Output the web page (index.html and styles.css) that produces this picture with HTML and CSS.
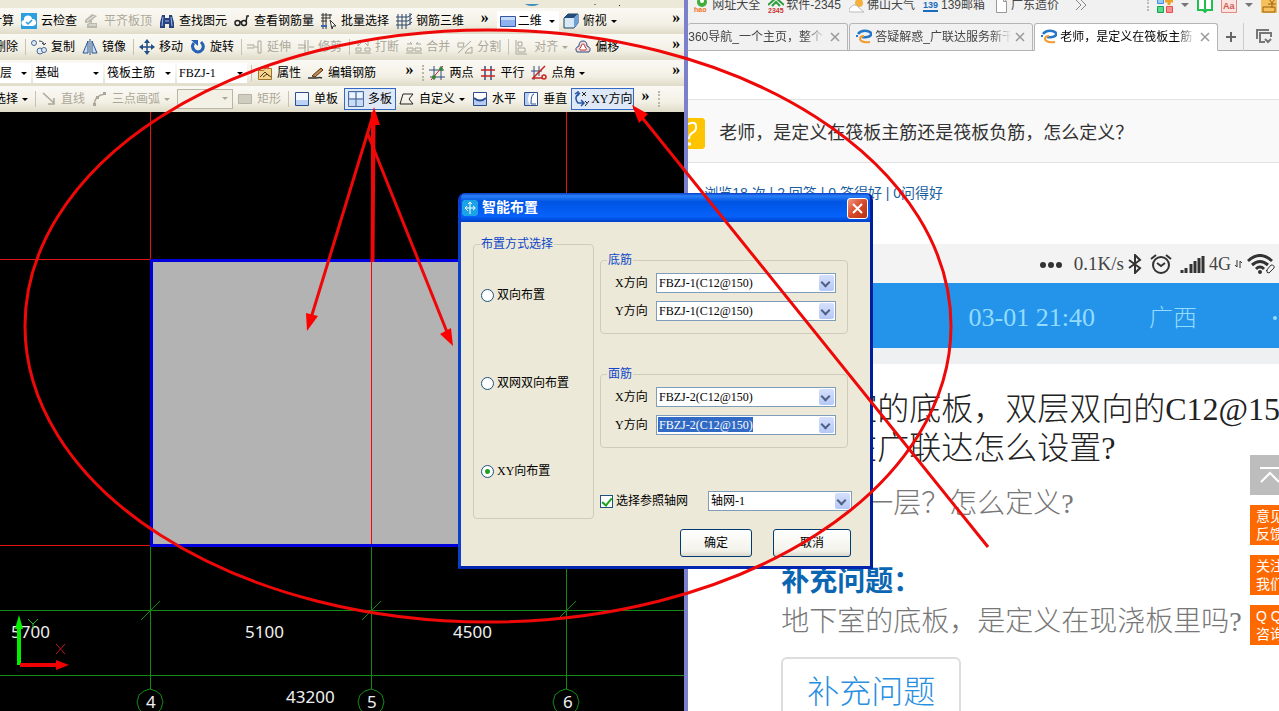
FILE: index.html
```html
<!DOCTYPE html>
<html lang="zh-CN">
<head>
<meta charset="utf-8">
<title>智能布置</title>
<link rel="stylesheet" href="styles.css">
</head>
<body>
<main class="desktop">
<section class="cad" aria-label="钢筋绘图">
  <div class="topstrip"><svg width="120" height="8" aria-hidden="true"><ellipse cx="32" cy="-2" rx="8" ry="4" fill="#3c8fc0"/><path d="M94 0h2M121 0l-2 2" stroke="#222"/></svg></div>

  <div class="bar">
    <div class="strip strip-a">
      <button class="tool cut">计算</button>
      <button class="tool"><svg class="ic" viewBox="0 0 16 16"><path fill="#2b9fe0" d="M0 0h16v16H0z"/><path fill="#fff" d="M4 13a3 3 0 0 1-1-6 4 4 0 0 1 8-1 3.500 3.500 0 0 1 1 7z"/><path d="M5 9l2 2 4-4" stroke="#2b9fe0" stroke-width="1.500" fill="none"/></svg>云检查</button>
      <button class="tool off"><svg class="ic" viewBox="0 0 16 16"><path fill="#bbb8ac" d="M1 7l7-6 5 2-5 4v3h5v5H3v-4l4-2-6 1z"/><path stroke="#eee" d="M3 8l7-5M5 12h7" fill="none"/></svg>平齐板顶</button>
      <button class="tool"><svg class="ic" viewBox="0 0 16 16"><path fill="#26437f" d="M3 2h3v3h4V2h3l2 8v5h-5v-4H6v4H1v-5z"/><path stroke="#9db8ea" d="M4 4L3 13M12 4l1 9M6 8h4" fill="none"/></svg>查找图元</button>
      <button class="tool"><svg class="ic" viewBox="0 0 16 16"><g fill="none" stroke="#222" stroke-width="1.500"><circle cx="3.500" cy="10" r="2.500"/><circle cx="10" cy="10" r="2.500"/><path d="M6 9h2M12 9l1-6h2"/></g></svg>查看钢筋量</button>
      <button class="tool"><svg class="ic" viewBox="0 0 16 16"><path d="M0 2h11M0 5h9M0 8h6M2 0v16M5 0v16M9 1v5" stroke="#333" fill="none"/><path d="M9 7l6 6-3 0-1 3z" fill="#fff" stroke="#333"/><path d="M0 13h6" stroke="#3b62b5" stroke-width="2"/></svg>批量选择</button>
      <button class="tool"><svg class="ic" viewBox="0 0 16 16"><path d="M0 4h12l4-3M0 8h12l4-3M0 12h12l4-3M2 1v15M6 1v15M10 1v15M14 0v12" stroke="#2d4668" fill="none"/></svg>钢筋三维</button>
      <button class="more">»</button>
    </div>
    <div class="strip">
      <span class="combo combo-view"><svg class="ic" viewBox="0 0 16 16"><path fill="#8fb2ee" stroke="#3157a5" d="M.5 3.500h15v10H.5z"/><path fill="#c7dafa" d="M1 4h14v3H1z"/></svg><select aria-label="视图"><option>二维</option></select></span>
      <button class="tool"><svg class="ic" viewBox="0 0 16 16"><path fill="#d7e8f7" stroke="#20405f" d="M1 5l4-4h10v9l-4 5H1z"/><path fill="#244d7d" d="M1 5l4-4h10l-4 4z"/><path fill="#6ca2d8" d="M11 5l4-4v9l-4 5z"/></svg>俯视<i class="tri"></i></button>
      <button class="more">»</button>
    </div>
  </div>

  <div class="bar">
    <div class="strip">
      <button class="tool cut-s">删除</button><i class="sep"></i>
      <button class="tool"><svg class="ic" viewBox="0 0 16 16"><g fill="#dfe9f7" stroke="#4a6a94"><circle cx="3" cy="4" r="2.500"/><circle cx="9" cy="12" r="3"/><circle cx="13" cy="11" r="2.500"/></g><path d="M8 2q5 0 5 4m-2-2l2 2 2-2" fill="none" stroke="#345"/></svg>复制</button>
      <button class="tool"><svg class="ic" viewBox="0 0 16 16"><path d="M6 2v12H1zM10 2v12h5z" fill="#c8dcf4" stroke="#2b5490"/><path d="M8 0v16" stroke="#2b5490"/></svg>镜像</button><i class="sep"></i>
      <button class="tool"><svg class="ic" viewBox="0 0 16 16"><path d="M8 2v12M2 8h12" stroke="#234e86" stroke-width="1.500"/><path fill="#234e86" d="M8 0l3 4H5zM8 16l3-4H5zM0 8l4-3v6zM16 8l-4-3v6z"/></svg>移动</button>
      <button class="tool"><svg class="ic" viewBox="0 0 16 16"><path d="M4 4q-3 3 0 7 4 4 8 0 3-4-1-8" fill="none" stroke="#2661b4" stroke-width="3"/><path fill="#2661b4" d="M1 1h7v6z"/></svg>旋转</button><i class="sep"></i>
      <button class="tool off"><svg class="ic" viewBox="0 0 16 16"><path d="M0 6h7v3H0M8 8h3M11 2h3v12h-3z" fill="none" stroke="#aaa79a"/></svg>延伸</button>
      <button class="tool off"><svg class="ic" viewBox="0 0 16 16"><path d="M0 6h7v3H0M7 1v14h3V1M11 8h5" fill="none" stroke="#aaa79a"/></svg>修剪</button><i class="sep"></i>
      <button class="tool off"><svg class="ic" viewBox="0 0 16 16"><path d="M0 14h16M1 9h5v3H1zM10 9h5v3h-5zM3 2v5l3-3M13 2v5l-3-3" fill="none" stroke="#aaa79a"/></svg>打断</button>
      <button class="tool off"><svg class="ic" viewBox="0 0 16 16"><path d="M0 14h16M1 9h6v3H1zM9 9h6v3H9zM1 5h5L4 3M15 5h-5l2-2" fill="none" stroke="#aaa79a"/></svg>合并</button>
      <button class="tool off"><svg class="ic" viewBox="0 0 16 16"><path d="M1 4h6l-1 4H1zM1 14L14 2M8 14h7V8l-4 2z" fill="none" stroke="#aaa79a"/></svg>分割</button><i class="sep"></i>
      <button class="tool off"><svg class="ic" viewBox="0 0 16 16"><path d="M2 1v14h11M4 3h4v4H4zM4 9h7v4H4z" fill="none" stroke="#aaa79a"/></svg>对齐<i class="tri"></i></button>
      <button class="tool"><svg class="ic" viewBox="0 0 16 16"><path d="M2 13q-3-4 2-6 0-5 4-5t4 5q5 2 2 6z" fill="#f3d9dc" stroke="#294b7c"/><path d="M5 11q-1-2 1-3 0-3 2-3t2 3q2 1 1 3z" fill="#fff" stroke="#c43a3a"/></svg>偏移</button>
      <button class="more">»</button>
    </div>
  </div>

  <div class="bar">
    <div class="strip strip-b">
      <span class="combo combo-floor"><select aria-label="楼层"><option>层</option></select></span>
      <span class="combo"><select aria-label="类型"><option>基础</option></select></span>
      <span class="combo"><select aria-label="构件"><option>筏板主筋</option></select></span>
      <span class="combo"><select aria-label="名称"><option>FBZJ-1</option></select></span>
      <i class="sep sep-in"></i>
      <button class="tool"><svg class="ic" viewBox="0 0 16 16"><path fill="#f4d58c" stroke="#a0732c" d="M1.500 5.500h5l1-2h7v11h-13z"/><path fill="none" stroke="#553b1c" d="M3 12l5-5 4 4M6 12l4-3 4 3"/><path fill="#d54" d="M9 1h3v3H9z"/></svg>属性</button>
      <button class="tool"><svg class="ic" viewBox="0 0 16 16"><path d="M0 13h8q4-1 6 0" fill="none" stroke="#333" stroke-width="1.500"/><path d="M4 11l9-8 2 2-8 7z" fill="#c8894b" stroke="#4c3018"/></svg>编辑钢筋</button>
      <button class="more">»</button>
    </div>
    <div class="strip">
      <i class="grip"></i>
      <button class="tool"><svg class="ic" viewBox="0 0 16 16"><path d="M0 5h15M1 12h15M5 1v14M12 1v14" stroke="#334c80"/><path d="M2 15L14 1" stroke="#c22"/><circle cx="5" cy="12" r="2" fill="#383"/><circle cx="12" cy="4" r="2" fill="#383"/></svg>两点</button>
      <button class="tool"><svg class="ic" viewBox="0 0 16 16"><path d="M5 1v14M11 1v14" stroke="#334c80" stroke-width="1.500"/><path d="M1 5h14M1 11h14" stroke="#c22" stroke-width="1.500"/></svg>平行</button>
      <button class="tool"><svg class="ic" viewBox="0 0 16 16"><path d="M0 6h11M3 1v14M8 1v10" stroke="#334c80"/><path d="M1 14L14 1M2 13h9" stroke="#c22" stroke-width="1.500"/><circle cx="13" cy="12" r="2" fill="none" stroke="#c22" stroke-width="1.500"/></svg>点角<i class="tri"></i></button>
      <button class="more">»</button>
    </div>
  </div>

  <div class="bar">
    <div class="strip">
      <button class="tool cut-s">选择<i class="tri"></i></button><i class="sep"></i>
      <button class="tool off"><svg class="ic" viewBox="0 0 16 16"><path d="M2 2l11 10M13 7v6H7" fill="none" stroke="#aaa79a" stroke-width="1.500"/></svg>直线</button>
      <button class="tool off"><svg class="ic" viewBox="0 0 16 16"><path d="M2 14Q3 4 13 3" fill="none" stroke="#aaa79a" stroke-width="1.500"/><path d="M1 12h3v3H1zM11 1h3v3h-3zM4 5h3v3H4z" fill="#aaa79a"/></svg>三点画弧<i class="tri"></i></button>
      <span class="combo combo-off"><select aria-label="画弧参数" disabled><option></option></select></span>
      <button class="tool off"><svg class="ic" viewBox="0 0 16 16"><path d="M1.500 3.500h13v9h-13z" fill="#cfccc0" stroke="#b7b4a7"/></svg>矩形</button><i class="sep"></i>
      <button class="tool"><svg class="ic" viewBox="0 0 16 16"><path d="M1.500 1.500h13v13h-13z" fill="#f4f8ff" stroke="#2c4f91"/><path d="M2 9h12v5H2z" fill="#bcd2f6"/></svg>单板</button>
      <button class="tool on"><svg class="ic" viewBox="0 0 16 16"><path d="M.5.500h15v15H.5z" fill="#c9dcf7" stroke="#4b6d9f"/><path d="M8 1v14M1 8h14" stroke="#3c5c8c"/><path d="M2 2h5v5H2zM9 2h5v5H9z" fill="#edf5ff"/></svg>多板</button>
      <button class="tool"><svg class="ic" viewBox="0 0 16 16"><path d="M4 3h10l-4 5 4 5H1z" fill="none" stroke="#222"/></svg>自定义<i class="tri"></i></button>
      <button class="tool"><svg class="ic" viewBox="0 0 16 16"><path d="M1.500 1.500h13v13h-13z" fill="#b6cdf1" stroke="#2c4f91"/><path d="M2 2h12v5q-6 5-12 0z" fill="#fff"/><path d="M2 7q6 5 12 0" fill="none" stroke="#2c4f91" stroke-width="2"/></svg>水平</button>
      <button class="tool"><svg class="ic" viewBox="0 0 16 16"><path d="M1.500 1.500h13v13h-13z" fill="#b6cdf1" stroke="#2c4f91"/><path d="M7 2h7v12H7q-4-6 0-12z" fill="#fff"/><path d="M11 3q-3 0-3 10h5" fill="none" stroke="#2c4f91"/></svg>垂直</button>
      <button class="tool on tight"><svg class="ic" viewBox="0 0 16 16"><path d="M7 2q-7 4-2 10h5M2 3l3-2v4M8 9l3 3-3 3" fill="none" stroke="#2856a2" stroke-width="1.500"/><path d="M9 1l4 4m0-4L9 5M12 10l2 2m2-2l-4 5" stroke="#222"/></svg>XY方向</button>
      <button class="more near">»</button><i class="grip"></i>
    </div>
  </div>

  <svg class="canvas" role="img" aria-label="轴网图">
    <g transform="translate(0 -112)" fill="none" shape-rendering="crispEdges">
      <path d="M150.500 112v148M371.500 112v148M566.500 112v148" stroke="#e01414"/>
      <path d="M0 259h150v1H0zM0 545h150v1H0z" fill="#e01414"/>
      <path d="M151.500 260.500h415v285h-415z" fill="#b3b3b3" stroke="#0000dc" stroke-width="3"/>
      <path d="M371 262h1v282h-1z" fill="#f00808"/>
      <path d="M150.500 547v142M371.500 547v142M566.500 547v142M0 610.500h684M0 675.500h684" stroke="#148a14"/>
      <g stroke="#148a14" shape-rendering="auto"><path d="M141 620l19-19M362 620l19-19M560 617l16-16"/>
        <path id="axis" d="M150 689l6 2 5 4 2 7-2 7-5 5h-12l-5-5-2-7 2-7 5-4z"/><use href="#axis" x="221"/><use href="#axis" x="416"/></g>
      <g class="dims"><text x="11" y="638">5700</text><text x="245" y="638">5100</text><text x="453" y="638">4500</text><text x="286" y="703">43200</text><text x="146" y="708">4</text><text x="367" y="708">5</text><text x="563" y="708">6</text></g>
      <g shape-rendering="auto"><path d="M19 665v-38" stroke="#00f000" stroke-width="4"/><path d="M19 615l4 14h-8z" fill="#00f000"/><path d="M28 619l5 5 5-5M33 624v5" stroke="#20b820"/>
      <path d="M20 665h37" stroke="#f00000" stroke-width="4"/><path d="M69 665l-13 5v-10z" fill="#f00000"/><path d="M56 644l9 10m0-10l-9 10" stroke="#c01818"/></g>
    </g>
  </svg>
</section>

<section class="browser" aria-label="浏览器">
  <nav class="marks">
    <a href="#"><svg class="ic" viewBox="0 0 16 16"><circle cx="8" cy="5" r="5" fill="#3fae3b"/><circle cx="8" cy="4" r="2" fill="#fff"/><text class="mini orange" x="0" y="15">hao</text></svg>网址大全</a>
    <a href="#"><svg class="ic" viewBox="0 0 16 16"><path d="M0 8l8-7 8 7M4 9l4-4 4 4" fill="none" stroke="#2f9e3e" stroke-width="2"/><text class="mini red" x="0" y="16">2345</text></svg>软件-2345</a>
    <a href="#"><svg class="ic" viewBox="0 0 16 16"><circle cx="10" cy="6" r="4" fill="#f6b13c"/><path d="M1 15a3 3 0 0 1 1-5 4 4 0 0 1 7 0l6 5z" fill="#fff" stroke="#bbb"/></svg>佛山天气</a>
    <a href="#"><svg class="ic" viewBox="0 0 16 16"><text class="mini blue" x="0" y="11">139</text><path d="M0 14h15" stroke="#1a6dbd" stroke-width="2"/></svg>139邮箱</a>
    <a href="#"><svg class="ic" viewBox="0 0 16 16"><path d="M3.500.5h7l3 4v11h-10zM10.500.5v4h3" fill="#fff" stroke="#999"/></svg>广东造价</a>
    <button class="chev" aria-label="更多书签"><svg width="12" height="12" viewBox="0 0 12 12"><path d="M1 1l5 5-5 5M6 1l5 5-5 5" fill="none" stroke="#888"/></svg></button>
    <span class="ext">
      <i class="dots"></i>
      <svg class="ic" viewBox="0 0 16 16"><g stroke-width="1"><path d="M.5.5h6v6h-6z" fill="#9cc8f5" stroke="#3b8ee0"/><path d="M.5 9.500h6v6h-6z" fill="#59d98a" stroke="#18a050"/><path d="M9.500 9.500h6v6h-6z" fill="#ff8f8f" stroke="#e05050"/><path d="M12 0v8M8 4h8" stroke="#f0a020" stroke-width="3"/></g></svg><i class="tri gray"></i>
      <svg class="ic" viewBox="0 0 16 16"><path d="M1 1h14v12h-5l-2 2-2-2H1z" fill="#fff" stroke="#20c050" stroke-width="2"/><path d="M8 2v12" stroke="#20c050" stroke-width="2"/></svg>
      <svg class="ic" viewBox="0 0 16 16"><path d="M.5.5h15v15H.5z" fill="#fbe3e0" stroke="#df8b84"/><text class="mini aa" x="2" y="12">Aa</text></svg><i class="tri gray"></i>
      <svg class="ic" viewBox="0 0 16 16"><path d="M0 0h16v16H0z" fill="#f6c15a"/><path d="M2 10h12v5H2zM8 2l3 4 3-4M11 6v5M7 7h8" fill="none" stroke="#9a6012"/></svg>
    </span>
  </nav>
  <div class="tabs">
    <div class="tab tab-first"><a href="#">360导航_一个主页，整个</a><button aria-label="关闭"><svg width="10" height="10" viewBox="0 0 10 10"><path id="x" d="M1 1l8 8M9 1L1 9" stroke="#999" stroke-width="1.500"/></svg></button></div>
    <div class="tab"><svg class="ic" viewBox="0 0 16 16"><use href="#glodon"/></svg><a href="#">答疑解惑_广联达服务新干</a><button aria-label="关闭"><svg width="10" height="10" viewBox="0 0 10 10"><use href="#x"/></svg></button></div>
    <div class="tab active"><svg class="ic" viewBox="0 0 16 16"><g id="glodon" fill="none" stroke-width="2"><path d="M2 5Q5 1 11 2q5 1 4 4-2 3-9 2" stroke="#2477c8" stroke-width="2.500"/><path d="M8 7q-4 0-4 3 1 4 10 3" stroke="#f29a2e"/><path d="M0 7h2" stroke="#2477c8"/></g></svg><a href="#">老师，是定义在筏板主筋</a><button aria-label="关闭"><svg width="10" height="10" viewBox="0 0 10 10"><use href="#x"/></svg></button></div>
    <button class="plus" aria-label="新标签页"><svg width="12" height="12" viewBox="0 0 12 12"><path d="M6 1v10M1 6h10" stroke="#666" stroke-width="2"/></svg></button>
    <button class="restore" aria-label="恢复标签"><svg width="16" height="16" viewBox="0 0 16 16"><path d="M1 10V1h12M9 13H4V4h11v4M9 10l3 3 3-3" fill="none" stroke="#777" stroke-width="2"/></svg></button>
  </div>
  <div class="question">
    <svg width="17" height="31" viewBox="0 0 17 31" aria-hidden="true"><path fill="#fec400" d="M0 0h15l2 2v27l-2 2H0z"/><path d="M0 6q9-4 8 4 0 3-4 5-3 2-3 6" fill="none" stroke="#fff" stroke-width="2"/><path d="M0 26h3" stroke="#fff" stroke-width="3"/></svg>
    <h1>老师，是定义在筏板主筋还是筏板负筋，怎么定义？</h1>
  </div>
  <p class="stats">浏览18 次 | 2 回答 | 0 答得好 | 0问得好</p>
  <article class="phone">
    <div class="status">
      <svg width="22" height="8" viewBox="0 0 22 8" fill="#333"><circle cx="3" cy="5" r="3"/><circle cx="11" cy="5" r="3"/><circle cx="19" cy="5" r="3"/></svg>
      <span class="rate">0.1K/s</span>
      <svg width="14" height="20" viewBox="0 0 14 20"><path d="M1 6l11 8-5 5V1l5 5-11 8" fill="none" stroke="#333" stroke-width="2"/></svg>
      <svg class="alarm" width="22" height="22" viewBox="0 0 22 22"><circle cx="11" cy="12" r="8" fill="none" stroke="#333" stroke-width="2"/><path d="M7 10l4 3 4-3M1 6l5-4M21 6l-5-4" fill="none" stroke="#333" stroke-width="2"/></svg>
      <svg width="25" height="18" viewBox="0 0 25 18"><path d="M2 18v-3M6 18v-5M11 18v-9M15 18V6M19 18V3M23 18V1" stroke="#333" stroke-width="3"/></svg>
      <span class="net">4G</span>
      <svg width="8" height="8" viewBox="0 0 8 8"><path d="M2 0v7L0 5M5 8V1l2 2" fill="none" stroke="#333"/></svg>
      <svg width="28" height="20" viewBox="0 0 28 20"><path d="M1 7Q13-4 25 7M5 11q8-7 16 0M9 15q4-4 8 0" fill="none" stroke="#333" stroke-width="3"/><circle cx="13" cy="18" r="2" fill="#333"/><path d="M19 17l5-6q4 0 3 3l-5 5q-3 0-2-3" fill="#f3f3f3" stroke="#333"/></svg>
    </div>
    <div class="meta"><time>03-01 21:40</time><span>广西</span><i class="dot"></i></div>
    <div class="answer">
      <p class="big">地下室的底板，双层双向的C12@150</p>
      <p class="big">请问在广联达怎么设置?</p>
      <p class="soft first">是不是一层？怎么定义?</p>
      <h2>补充问题：</h2>
      <p class="soft">地下室的底板，是定义在现浇板里吗?</p>
      <button class="add">补充问题</button>
    </div>
  </article>
</section>

<aside class="side">
  <a class="up" href="#" aria-label="返回顶部"><svg width="40" height="40" viewBox="0 0 40 40"><path d="M10 13h20M11 27l9-9 9 9" fill="none" stroke="#fff" stroke-width="2"/></svg></a>
  <a href="#">意见<br>反馈</a>
  <a href="#">关注<br>我们</a>
  <a href="#">Q Q<br>咨询</a>
</aside>

<form class="dialog" aria-label="智能布置">
  <header><svg class="ic" viewBox="0 0 16 16"><path fill="#1aa3e8" d="M2 0h12l2 2v12l-2 2H2l-2-2V2z"/><path d="M8 2v12M3 8h10M5 6L3 8l3 3M11 6q4 2 0 4M6 4l2-2 2 2" fill="none" stroke="#fff"/></svg><strong>智能布置</strong>
    <button type="button" class="close" aria-label="关闭"><svg width="19" height="19" viewBox="0 0 19 19"><path d="M5 5l9 9M14 5l-9 9" stroke="#fff" stroke-width="2"/></svg></button></header>
  <div class="dbody">
    <fieldset class="modes"><legend>布置方式选择</legend>
      <label><input type="radio" name="m">双向布置</label>
      <label><input type="radio" name="m">双网双向布置</label>
      <label><input type="radio" name="m" checked>XY向布置</label>
    </fieldset>
    <div class="right">
      <fieldset class="bars"><legend>底筋</legend>
        <label for="bx">X方向</label><span class="pick"><select id="bx"><option>FBZJ-1(C12@150)</option></select></span>
        <label for="by">Y方向</label><span class="pick"><select id="by"><option>FBZJ-1(C12@150)</option></select></span>
      </fieldset>
      <fieldset class="bars last"><legend>面筋</legend>
        <label for="tx">X方向</label><span class="pick"><select id="tx"><option>FBZJ-2(C12@150)</option></select></span>
        <label for="ty">Y方向</label><span class="pick"><input id="ty" type="text" value="FBZJ-2(C12@150)"></span>
      </fieldset>
      <div class="axis-row"><label><input type="checkbox" checked>选择参照轴网</label><span class="pick"><select aria-label="轴网"><option>轴网-1</option></select></span></div>
      <div class="actions"><button type="button" class="ok">确定</button><button type="button" class="cancel">取消</button></div>
    </div>
  </div>
</form>

<svg class="ink" aria-hidden="true">
  <g fill="none" stroke="#ee0808" stroke-width="3">
    <ellipse cx="488" cy="326" rx="463" ry="296"/>
    <path d="M374 112L311 318M367 132L447 332M988 547L640 115"/><path d="M372.500 262L373.500 120" stroke-width="4"/>
  </g>
  <path fill="#ff0000" d="M307 331l-1-18 12 3zM453 346l-13-12 11-6zM374 107l-5 18h11zM632 105l16 9-9 9z"/>
</svg>
</main>
</body>
</html>
```
FILE: styles.css
```css
* { box-sizing: border-box; }
body { margin: 0; background: #fff; font: 12px/16px "Liberation Serif", "Noto Sans CJK SC", sans-serif; color: #000; }
button, select, input { font: inherit; color: inherit; margin: 0; padding: 0; border: 0; background: none; }
select { appearance: none; }
a { color: inherit; text-decoration: none; }
h1, h2, p { margin: 0; font-weight: inherit; }
.desktop { position: relative; display: flex; height: 100vh; overflow: hidden; }
.ic { width: 16px; height: 16px; flex: none; }

/* drawing application */
.cad { flex: 0 0 53.5%; min-width: 0; display: flex; flex-direction: column; background: #ece9d8; }
.topstrip { height: 8px; padding-left: 500px; overflow: hidden; }
.bar { display: flex; height: 26px; background: linear-gradient(#faf9f4, #f3f1e6 60%, #e0dcc9); }
.strip { display: flex; flex: 1 1 0; align-items: center; min-width: 0; overflow: hidden; }
.strip-a { flex: 0 0 72%; }
.strip-b { flex: 0 0 61%; }
.tool { display: flex; flex: none; align-items: center; gap: 4px; margin-right: 7px; white-space: nowrap; }
.tool.off { color: #aca899; }
.tool.on { height: 22px; padding: 0 3px; margin: 0 3px 0 -1px; border: 1px solid #316ac5; background: #dfe8f6; }
.tool.tight { gap: 2px; margin-left: -3px; padding: 0 1px; }
.cut { margin-left: -10px; }
.cut-s { margin-left: -6px; }
.tri { flex: none; border: 3px solid transparent; border-top-color: currentColor; border-bottom: 0; }
.sep { flex: none; width: 1px; height: 16px; margin-right: 5px; background: #c5c2b8; }
.sep-in { margin-left: 2px; }
.more { margin: 0 4px 6px auto; font-size: 16px; line-height: 16px; font-weight: bold; }
.more.near { margin-left: 4px; }
.grip { flex: none; height: 16px; margin: 0 5px; border-left: 2px dotted #bbb7a8; }
.combo { position: relative; display: flex; align-items: center; flex: none; width: 70px; height: 20px; margin-right: 2px; background: #fff; }
.combo select { flex: 1; min-width: 0; height: 18px; padding-left: 2px; }
.combo::after { content: ""; position: absolute; right: 4px; top: 9px; border: 3px solid transparent; border-top-color: #000; border-bottom: 0; }
.combo-floor { width: 31px; }
.combo-floor select { padding-left: 0; }
.combo-view { width: 62px; margin: 0 4px; padding-left: 3px; }
.combo-off { width: 56px; margin-right: 4px; border: 1px solid #b9b6a8; background: #f3f1e6; }
.combo-off::after { top: 7px; border-top-color: #aca899; }
.canvas { flex: 1; width: 100%; min-height: 0; background: #000; }
.dims { font: 17px "Noto Sans", sans-serif; fill: #f0f0f0; }

/* browser */
.browser { flex: 1; min-width: 0; overflow: hidden; border-left: 4px solid #7b80cb; background: #fff; font-family: "Liberation Sans", "Noto Sans CJK SC", sans-serif; }
.marks { display: flex; align-items: center; height: 23px; padding: 0 2px 14px 6px; background: #f1f1f1; color: #444; }
.marks > a { display: flex; flex: none; align-items: center; gap: 2px; height: 16px; margin-right: 8px; white-space: nowrap; }
.mini { font: bold 7px "Liberation Sans", sans-serif; }
.orange { fill: #f07020; }
.red { fill: #c33; }
.blue { fill: #1a6dbd; font-size: 9px; }
.aa { fill: #d05850; font-size: 9px; }
.chev { display: flex; margin-left: 8px; }
.ext { display: flex; flex: none; align-items: center; gap: 8px; margin: 0 0 0 auto; }
.dots { height: 12px; border-left: 2px dotted #bbb; }
.gray { color: #777; border-width: 4px 4px 0; }
.tabs { display: flex; height: 28px; background: #f1f1f1; box-shadow: inset 0 -1px #a6a6a6; }
.tab { display: flex; flex: 0 1 184px; align-items: center; gap: 3px; min-width: 0; margin-right: 1px; padding: 0 6px; border: 1px solid #b5b5b5; border-radius: 3px 3px 0 0; background: #f1f1f1; color: #444; }
.tab-first { flex-basis: 160px; padding-left: 0; border-left: 0; }
.tab a { flex: 1; overflow: hidden; white-space: nowrap; mask-image: linear-gradient(90deg, #000 85%, transparent); }
.tab button { display: flex; padding: 0 1px; }
.tab.active { background: #fff; border-bottom-color: #fff; color: #000; }
.plus { display: flex; align-items: center; padding: 0 6px; border-right: 1px solid #ccc; }
.restore { display: flex; align-items: center; margin-left: 12px; }
.question { display: flex; align-items: center; gap: 14px; height: 64px; margin-top: 48px; padding-top: 4px; border: solid #e2e2e2; border-width: 1px 0; background: #f9f9f9; }
.question h1 { font-size: 18px; line-height: 26px; color: #333; white-space: nowrap; }
.stats { height: 81px; padding: 20px 0 0 16px; font-size: 14px; line-height: 20px; color: #1c5f9f; white-space: nowrap; }
.phone { font-family: "Liberation Serif", "Noto Sans CJK SC", sans-serif; font-weight: 300; }
.status { display: flex; align-items: center; justify-content: flex-end; gap: 4px; height: 39px; padding-right: 4px; background: #f3f3f3; color: #444; font-size: 18px; }
.rate { margin-left: 8px; font-size: 19px; }
.alarm { margin: 0 4px; }
.meta { display: flex; align-items: center; justify-content: flex-end; height: 65px; padding: 4px 2px 0 0; background: #2494eb; color: #93dcff; font-size: 24px; line-height: 32px; white-space: nowrap; }
.meta time { font-size: 26px; }
.meta span { margin: 0 76px 0 54px; }
.dot { width: 4px; height: 4px; border-radius: 50%; background: currentColor; }
.answer { padding: 26px 0 0 93px; border-top: 16px solid #eff0f2; white-space: nowrap; }
.big { font-size: 32px; line-height: 39px; color: #222; }
.soft { font-size: 28px; line-height: 40px; color: #777; }
.soft.first { margin: 16px 0 38px; }
.answer h2 { font-size: 28px; line-height: 40px; font-weight: bold; color: #0b66b2; }
.add { height: 70px; margin-top: 15px; padding: 0 24px; border: 2px solid #ddd; border-radius: 6px; color: #2a8fe0; font-size: 32px; }

.side { position: absolute; right: -11px; top: 455px; display: grid; gap: 10px; font: 14px/18px "Liberation Sans", "Noto Sans CJK SC", sans-serif; color: #fff; }
.side a { width: 40px; height: 40px; padding: 2px 6px; background: #ff6a00; white-space: nowrap; }
.side .up { padding: 0; background: #bdbdbd; }

/* dialog window */
.dialog { position: absolute; left: 458px; top: 193px; width: 415px; border: 3px solid #0a3fd0; border-top: 0; border-right-color: #001e9c; border-bottom-color: #0026b0; border-radius: 7px 7px 0 0; background: #0a50e0; }
.dialog header { display: flex; align-items: center; gap: 4px; height: 29px; padding: 1px 2px 0 1px; border-radius: 5px 5px 0 0; background: linear-gradient(#0a3cc8, #2a80f8 10%, #0054e3 30%, #0562fa 80%, #0040c8); color: #fff; font-size: 14px; }
.close { display: flex; margin-left: auto; border: 1px solid #fff; border-radius: 3px; background: linear-gradient(135deg, #ee9a80, #d8482a 50%, #b93013); }
.dbody { display: flex; align-items: flex-start; gap: 6px; padding: 14px 18px 9px 12px; background: #ece9d8; }
fieldset { min-width: 0; margin: 0; border: 1px solid #cfccba; border-radius: 4px; }
legend { padding: 0 1px; color: #0f46c8; }
.modes { display: flex; flex: 0 0 121px; flex-direction: column; gap: 72px; height: 283px; padding: 35px 0 0 7px; }
.modes legend { margin-left: -1px; }
.modes label, .axis-row label { display: flex; align-items: center; gap: 3px; white-space: nowrap; }
input[type="radio"], input[type="checkbox"] { appearance: none; width: 13px; height: 13px; border: 1px solid #1d5281; background: #fff; }
input[type="radio"] { border-radius: 50%; }
input[type="radio"]:checked { background: radial-gradient(#21a121 2px, #fff 3px); }
input[type="checkbox"] { display: grid; place-items: center; }
input[type="checkbox"]:checked::before { content: ""; width: 4px; height: 8px; border: solid #21a121; border-width: 0 2px 2px 0; transform: rotate(40deg); }
.right { flex: 1; min-width: 0; padding-top: 16px; }
.bars { display: grid; grid-template-columns: 34px 1fr; gap: 7px; align-items: center; height: 82px; margin: 0 4px 32px 0; padding: 5px 11px 12px 14px; }
.bars.last { margin-bottom: 43px; }
.bars legend { margin-left: -8px; }
.pick { position: relative; display: flex; align-items: center; height: 20px; border: 1px solid #7f9db9; background: #fff; }
.pick select { width: 100%; height: 18px; padding-left: 2px; }
.pick input { width: 95px; height: 15px; margin-left: 1px; padding-left: 1px; background: #316ac5; color: #fff; }
.pick::before { content: ""; position: absolute; right: 1px; top: 1px; width: 15px; height: 16px; border-radius: 2px; background: linear-gradient(#d6e0fc, #b5c8f6); pointer-events: none; }
.pick::after { content: ""; position: absolute; right: 6px; top: 5px; width: 5px; height: 5px; border: solid #4d6185; border-width: 0 2px 2px 0; transform: rotate(45deg); pointer-events: none; }
.axis-row { display: flex; align-items: center; justify-content: space-between; }
.axis-row .pick { width: 144px; }
.actions { display: flex; justify-content: flex-end; gap: 21px; margin-top: 18px; }
.actions button { width: 72px; height: 28px; border: 1px solid #003c74; border-radius: 3px; background: linear-gradient(#fff, #f3f2ea 80%, #dcd8cb); }
.actions .cancel { width: 78px; margin-right: 1px; }

.ink { position: absolute; left: 0; top: 0; width: 100%; height: 100%; pointer-events: none; }
```
